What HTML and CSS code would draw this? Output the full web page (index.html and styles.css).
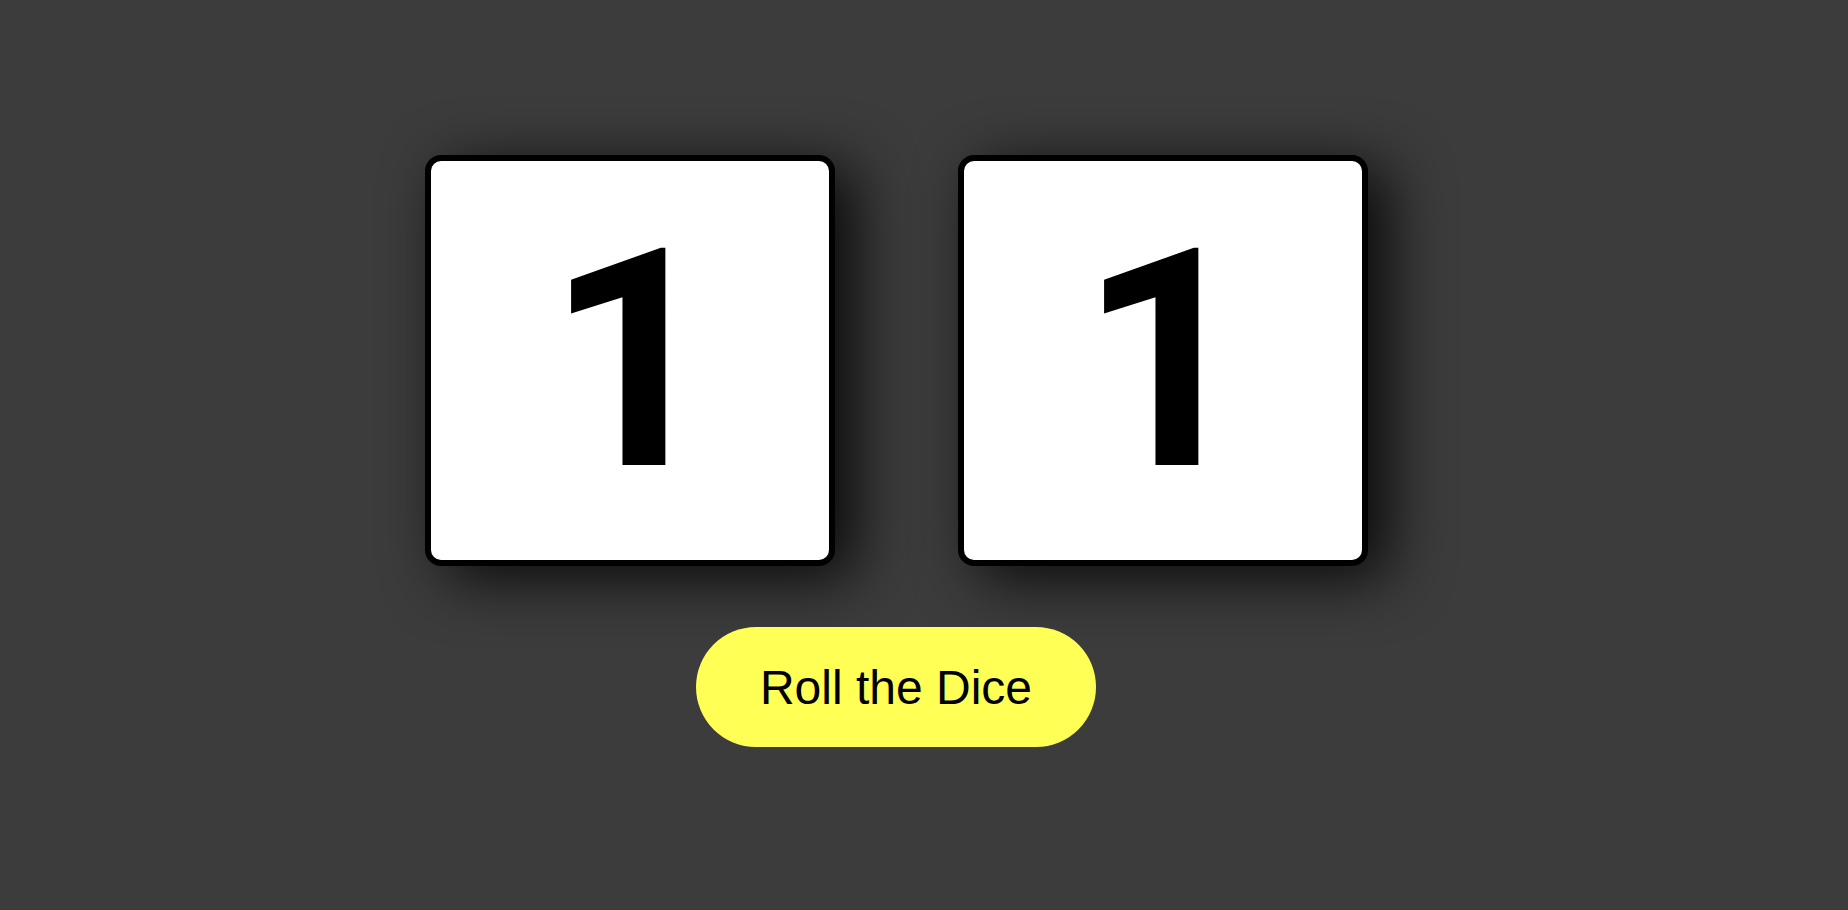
FILE: index.html
```html
<!DOCTYPE html>
<html lang="en">
<head>
<meta charset="utf-8">
<title>Dice</title>
<link rel="stylesheet" href="styles.css">
</head>
<body>
<main class="app">
  <div class="dice-row">
    <div class="die"><span class="face">1</span></div>
    <div class="die"><span class="face">1</span></div>
  </div>
  <button class="roll-btn" type="button">Roll the Dice</button>
</main>
</body>
</html>
```

FILE: styles.css
```css
html, body {
  margin: 0;
  padding: 0;
  height: 100%;
}
body {
  background: #3c3c3c;
  font-family: "Liberation Sans", Arial, sans-serif;
}
.app {
  height: 100%;
  box-sizing: border-box;
  padding-right: 56px;
  padding-bottom: 8px;
  display: flex;
  flex-direction: column;
  align-items: center;
  justify-content: center;
  gap: 61px;
}
.dice-row {
  display: flex;
  gap: 123px;
}
.die {
  box-sizing: border-box;
  width: 410px;
  height: 411px;
  background: #fff;
  border: 6px solid #000;
  border-radius: 16px;
  box-shadow: 20px 12px 60px rgba(0, 0, 0, 0.85);
  display: flex;
  align-items: center;
  justify-content: center;
}
.face {
  font-family: Roboto, "Liberation Sans", sans-serif;
  font-size: 305px;
  font-weight: bold;
  line-height: normal;
  padding-left: 8px;
  color: #000;
}
.roll-btn {
  width: 400px;
  height: 120px;
  border: none;
  border-radius: 60px;
  background: #ffff55;
  color: #000;
  font-family: "Liberation Sans", Arial, sans-serif;
  font-size: 48px;
  padding: 0;
  cursor: pointer;
}
```
